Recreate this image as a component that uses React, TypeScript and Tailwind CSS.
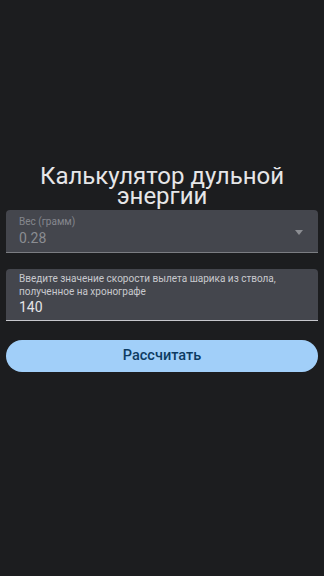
import { useState } from 'react'

/**
 * Muzzle energy calculator screen, dark Material style.
 */
export default function App() {
  const [weight] = useState('0.28')
  const [speed, setSpeed] = useState('140')

  return (
    <div
      className="w-[324px] h-[576px] bg-[#1c1d1f] flex flex-col px-[6px] pt-[166px]"
      style={{ fontFamily: 'Roboto, "Noto Sans", sans-serif' }}
    >
      <h1 className="text-center text-[24px] leading-[20px] text-[#e6e6e8]">
        Калькулятор дульной
        <br />
        энергии
      </h1>

      {/* Weight select (disabled look) */}
      <div className="mt-[4px] h-[43px] rounded-t-[4px] bg-[#44464d] border-b border-[#7b7d82] relative pl-[13px] pt-[6px]">
        <div className="text-[10px] leading-[12px] text-[#85878d]">Вес (грамм)</div>
        <div className="text-[14px] leading-[18px] text-[#8b8d92] mt-[1px]">{weight}</div>
        <svg
          className="absolute right-[15px] top-[20px]"
          width="8"
          height="5"
          viewBox="0 0 8 5"
        >
          <path d="M0 0 L8 0 L4 5 Z" fill="#8b8d92" />
        </svg>
      </div>

      {/* Speed input */}
      <div className="mt-[16px] rounded-t-[4px] bg-[#44464d] border-b border-[#c6c7cc] pl-[13px] pr-[8px] pt-[3px] pb-[4px]">
        <div className="text-[10px] leading-[13px] text-[#c8c9ce]">
          Введите значение скорости вылета шарика из ствола, полученное на хронографе
        </div>
        <input
          value={speed}
          onChange={(e) => setSpeed(e.target.value)}
          className="block w-full h-[18px] p-0 bg-transparent outline-none text-[14px] leading-[18px] text-[#e4e4e7]"
        />
      </div>

      <button className="mt-[19px] h-[32px] rounded-full bg-[#a1cff9] text-[#0d3b62] text-[14.5px] font-medium">
        Рассчитать
      </button>
    </div>
  )
}
